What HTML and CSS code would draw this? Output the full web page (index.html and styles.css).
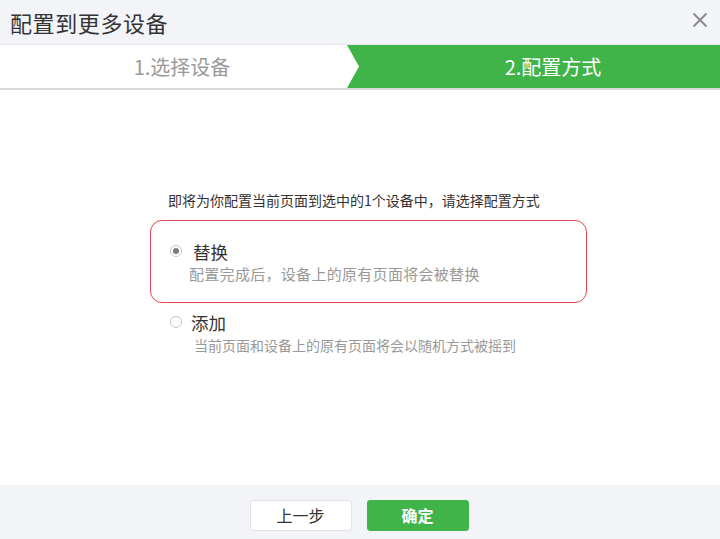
FILE: index.html
```html
<!DOCTYPE html>
<html lang="zh-CN">
<head>
    <meta charset="UTF-8">
    <meta name="viewport" content="width=device-width, initial-scale=1.0">
    <title>配置到更多设备</title>
    <link rel="stylesheet" href="styles.css">
</head>
<body>

<div class="dialog">
    <div class="header">
        <h2 class="title">配置到更多设备</h2>
        <span class="close">
            <svg width="16" height="16" viewBox="0 0 16 16"><path d="M1.5 1.5 L14.5 14.5 M14.5 1.5 L1.5 14.5" stroke="#8a8a8a" stroke-width="1.8" fill="none"/></svg>
        </span>
    </div>

    <div class="steps">
        <div class="step">1.选择设备</div>
        <div class="step active">2.配置方式</div>
    </div>

    <div class="content">
        <p class="intro">即将为你配置当前页面到选中的1个设备中，请选择配置方式</p>

        <div class="option selected">
            <div class="option-head">
                <span class="radio checked"></span>
                <span class="option-name">替换</span>
            </div>
            <div class="option-desc">配置完成后，设备上的原有页面将会被替换</div>
        </div>

        <div class="option">
            <div class="option-head">
                <span class="radio"></span>
                <span class="option-name">添加</span>
            </div>
            <div class="option-desc small">当前页面和设备上的原有页面将会以随机方式被摇到</div>
        </div>
    </div>

    <div class="footer">
        <button class="btn">上一步</button>
        <button class="btn primary">确定</button>
    </div>
</div>

</body>
</html>
```

FILE: styles.css
```css
body {
    margin: 0;
    font-family: "Noto Sans CJK SC", "Noto Sans", sans-serif;
    color: #333;
    background-color: #fff;
}
.dialog {
    width: 720px;
    height: 539px;
    display: flex;
    flex-direction: column;
}
.header {
    height: 44px;
    background-color: #f3f4f8;
    display: flex;
    align-items: center;
    justify-content: space-between;
    padding: 0 12px 0 10px;
}
.title {
    margin: 0;
    font-size: 22px;
    font-weight: normal;
    color: #333;
    letter-spacing: 0.6px;
}
.close {
    display: flex;
    margin-top: -4px;
}
.steps {
    display: flex;
    height: 43px;
    border-top: 1px solid #e4e6ea;
    border-bottom: 2px solid #d9d9d9;
}
.step {
    flex: 0 0 347px;
    display: flex;
    align-items: center;
    justify-content: center;
    font-size: 20px;
    color: #9a9a9a;
    padding-left: 17px;
    box-sizing: border-box;
}
.step.active {
    flex: 1;
    background-color: #40b349;
    color: #fff;
    padding-left: 39px;
    clip-path: polygon(0 0, 100% 0, 100% 100%, 0 100%, 12px 50%);
}
.content {
    flex: 1;
    padding: 100px 0 0 150px;
}
.intro {
    margin: 0 0 10px 18px;
    font-size: 14px;
    color: #333;
}
.option {
    width: 437px;
    box-sizing: border-box;
    padding: 0 0 0 19px;
    border: 1.5px solid transparent;
    border-radius: 12px;
}
.option.selected {
    border-color: #e0474f;
    height: 83px;
    padding-top: 18px;
    margin-bottom: 6px;
}
.option-head {
    display: flex;
    align-items: center;
    height: 24px;
}
.radio {
    width: 10px;
    height: 10px;
    border: 1px solid #c4c4c4;
    border-radius: 50%;
    box-sizing: content-box;
    position: relative;
    margin-right: 9px;
}
.radio.checked::after {
    content: "";
    position: absolute;
    left: 2px;
    top: 2px;
    width: 6px;
    height: 6px;
    border-radius: 50%;
    background-color: #7a7a7a;
}
.option-name {
    font-size: 17.5px;
    color: #333;
}
.option.selected .option-name {
    margin-left: 2px;
}
.option-desc {
    margin: 0 0 0 19px;
    font-size: 15px;
    letter-spacing: 0.3px;
    color: #999;
}
.option-desc.small {
    font-size: 14px;
    letter-spacing: 0;
    margin: 1px 0 0 24px;
}
.footer {
    height: 54px;
    box-sizing: border-box;
    padding: 6px 2px 0 0;
    background-color: #f3f4f8;
    display: flex;
    justify-content: center;
    align-items: center;
    gap: 15px;
}
.btn {
    width: 102px;
    height: 31px;
    border: 1px solid #e2e2e2;
    border-radius: 3px;
    background-color: #fff;
    font-family: inherit;
    font-size: 16px;
    color: #333;
    cursor: pointer;
}
.btn.primary {
    background-color: #40b349;
    border-color: #40b349;
    color: #fff;
    font-weight: bold;
}
```
